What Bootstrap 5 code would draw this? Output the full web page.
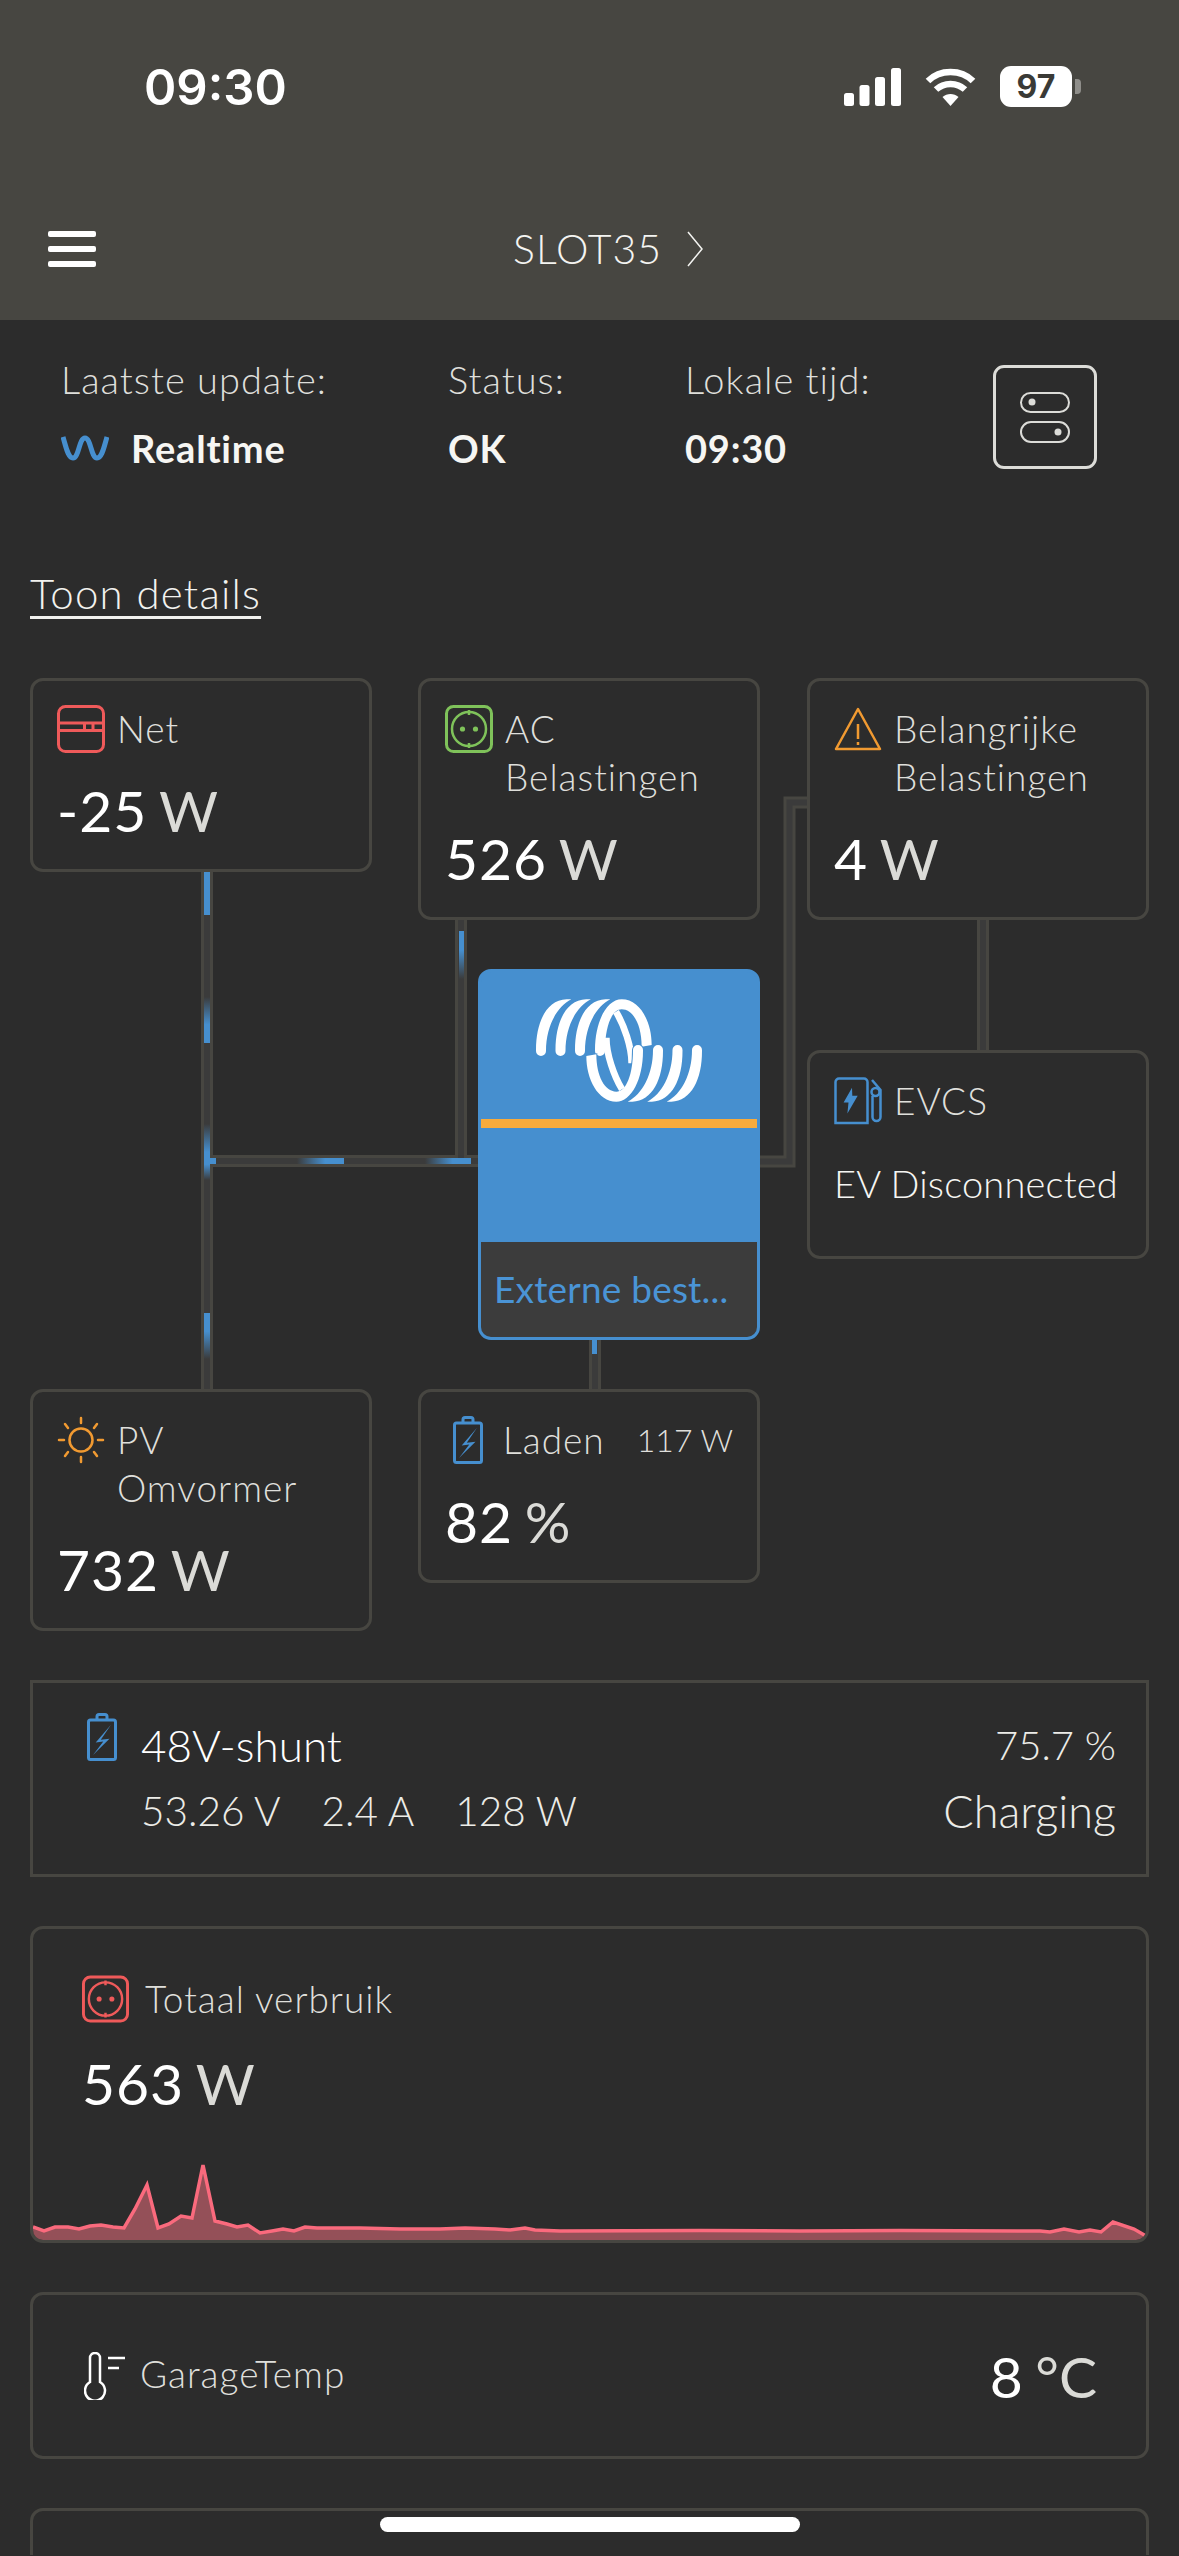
<!DOCTYPE html>
<html lang="nl">
<head>
<meta charset="UTF-8">
<meta name="viewport" content="width=device-width, initial-scale=1.0">
<title>SLOT35</title>
<link href="https://cdn.jsdelivr.net/npm/bootstrap@5.3.0/dist/css/bootstrap.min.css" rel="stylesheet">
<style>
html, body { height: 2556px; overflow: hidden; }
body { background: #2c2c2c; color: #dfdfdb; font-family: Lato, "Noto Sans", sans-serif; font-weight: 300; position: relative; }

.top-head { background: #474641; height: 320px; color: #fff; }
.ios-bar { height: 190px; padding: 58px 98px 0 144px; }
.ios-time { font-family: Inter, "Liberation Sans", sans-serif; font-weight: 600; font-size: 49px; line-height: 60px; }
.ios-icons { margin-top: 8px; }
.ios-batt { width: 72px; height: 41px; background: #fff; border-radius: 11px; color: #3a3a36; font-family: Inter, "Liberation Sans", sans-serif; font-weight: 700; font-size: 32px; line-height: 41px; text-align: center; }
.ios-nub { width: 6px; height: 15px; background: #8f8e8a; border-radius: 0 4px 4px 0; margin-left: 3px; }
.app-nav { height: 118px; padding-left: 48px; }
.burger { width: 48px; }
.burger i { display: block; height: 6px; background: #fff; border-radius: 2px; margin-bottom: 9px; }
.burger i:last-child { margin-bottom: 0; }
.site-name { margin-left: 417px; font-size: 41px; letter-spacing: 1px; line-height: 48px; color: #f4f4f1; }

.info-row { padding: 45px 82px 0 61px; }
.info-col { font-size: 38px; letter-spacing: 1px; line-height: 48px; margin-top: -10px; }
.info-col b { display: block; margin-top: 21px; font-weight: 700; color: #f6f6f3; letter-spacing: .8px; }
.col-a { width: 387px; }
.col-a b { gap: 22px; }
.col-b { width: 237px; }
.col-c { width: 308px; }
.switch-btn { width: 104px; height: 104px; border: 3px solid #dcdcd8; border-radius: 11px; }

.toon-link { display: block; margin: 97px 0 61px 30px; font-size: 42px; letter-spacing: 1.200px; line-height: 48px; color: #f2f2ef; text-decoration: underline; text-underline-offset: 7px; text-decoration-thickness: 3px; }

.page-main { padding: 0 30px; }
.flow-map { position: relative; height: 953px; }
.wire-layer { position: absolute; left: 0; top: 0; }
.tile { position: absolute; background: #2c2c2c; border: 3px solid #474641; border-radius: 13px; width: 342px; padding: 24px 24px 0 24px; }
.tile-head { font-size: 37px; letter-spacing: 1px; line-height: 48px; display: flex; gap: 12px; }
.tile-head svg { flex: none; }
.tile-num { font-size: 57px; letter-spacing: 1px; word-spacing: -4px; line-height: 70px; margin-top: 22px; font-weight: 400; color: #fff; }
.tile-num span, .big-num span { color: #dbdbd7; font-weight: 400; letter-spacing: 0; }
.t-net { left: 0; top: 0; height: 194px; }
.t-ac { left: 388px; top: 0; height: 242px; }
.t-ess { left: 777px; top: 0; height: 242px; }
.t-evcs { left: 777px; top: 372px; height: 209px; }
.t-pv { left: 0; top: 711px; height: 242px; }
.t-bat { left: 388px; top: 711px; height: 194px; }
.ev-state { font-size: 38px; letter-spacing: .2px; line-height: 48px; margin-top: 34px; color: #f6f6f3; white-space: nowrap; }
.tail-w { margin-left: auto; font-size: 32px; letter-spacing: 0; }
.inverter { position: absolute; left: 448px; top: 291px; width: 282px; height: 371px; background: #468fcf; border: 3px solid #468fcf; border-radius: 13px; overflow: hidden; }
.inv-logo { display: block; margin: 27px auto 0; }
.inv-line { height: 9px; background: #f8ab3c; margin-top: 17px; }
.inv-gap { height: 114px; }
.inv-foot { height: 95px; background: #3c3c3c; color: #4a94d6; font-size: 37px; font-weight: 400; letter-spacing: .2px; line-height: 48px; padding: 23px 0 0 13px; white-space: nowrap; }

.wide-box { border: 3px solid #474641; margin-top: 49px; background: #2c2c2c; }
.shunt-box { height: 197px; padding: 30px 30px 0 54px; }
.shunt-name { font-size: 44px; line-height: 48px; color: #fff; margin-top: 8px; font-weight: 300; }
.shunt-sub { font-size: 40.500px; line-height: 48px; margin-top: 18px; color: #ecece8; }
.shunt-sub span { margin-right: 41px; }
.shunt-right { font-size: 40px; line-height: 48px; text-align: right; padding-top: 8px; color: #ecece8; }
.shunt-right div + div { margin-top: 18px; font-size: 45px; }
.round-box { border-radius: 13px; overflow: hidden; }
.total-box { height: 317px; }
.total-head { padding: 46px 0 0 49px; font-size: 37px; letter-spacing: 1px; line-height: 48px; }
.big-num { font-size: 57px; letter-spacing: 1px; word-spacing: -4px; line-height: 70px; font-weight: 400; color: #fff; }
.total-box .big-num { margin: 25px 0 0 49px; }
.spark { display: block; margin-top: auto; }
.temp-box { height: 167px; padding: 0 49px 0 51px; }
.temp-name { font-size: 37px; letter-spacing: 1px; line-height: 48px; margin: -3px 0 0 14px; }
.next-box { height: 47px; border-bottom: 0; border-radius: 13px 13px 0 0; }
.home-bar { position: absolute; left: 380px; top: 2517px; width: 420px; height: 15px; background: #fff; border-radius: 8px; }
</style>
</head>
<body>
<svg width="0" height="0" class="position-absolute">
  <defs>
    <symbol id="ic-socket" viewBox="0 0 48 48">
      <rect x="1.5" y="1.5" width="45" height="45" rx="7" fill="none" stroke="currentColor" stroke-width="3"/>
      <circle cx="24" cy="24" r="17" fill="none" stroke="currentColor" stroke-width="2.5"/>
      <path d="M24 5v5M24 38v5" stroke="currentColor" stroke-width="2.5"/>
      <circle cx="17.5" cy="24" r="2.6" fill="currentColor"/>
      <circle cx="30.5" cy="24" r="2.6" fill="currentColor"/>
    </symbol>
    <symbol id="ic-batt" viewBox="0 0 30 48">
      <path d="M10 7V3.5A2 2 0 0 1 12 1.5h6a2 2 0 0 1 2 2V7" fill="none" stroke="#468fcf" stroke-width="3"/>
      <rect x="1.5" y="7" width="27" height="39.5" rx="2" fill="none" stroke="#468fcf" stroke-width="3"/>
      <path d="M24 11.8 8.7 29.6l7.6-1.1L6 42l16.5-16.3-8.7 1.1z" fill="#468fcf"/>
    </symbol>
    <linearGradient id="fade-up" x1="0" y1="0" x2="0" y2="1"><stop offset="0" stop-color="#468fcf" stop-opacity="0"/><stop offset=".6" stop-color="#468fcf"/></linearGradient>
    <linearGradient id="fade-down" x1="0" y1="0" x2="0" y2="1"><stop offset=".4" stop-color="#468fcf"/><stop offset="1" stop-color="#468fcf" stop-opacity="0"/></linearGradient>
    <linearGradient id="fade-both" x1="0" y1="0" x2="0" y2="1"><stop offset="0" stop-color="#468fcf" stop-opacity="0"/><stop offset=".5" stop-color="#468fcf"/><stop offset=".72" stop-color="#468fcf"/><stop offset="1" stop-color="#468fcf" stop-opacity="0"/></linearGradient>
    <linearGradient id="fade-right" x1="0" y1="0" x2="1" y2="0"><stop offset="0" stop-color="#468fcf" stop-opacity="0"/><stop offset=".6" stop-color="#468fcf"/></linearGradient>
  </defs>
</svg>

<header class="top-head">
  <div class="ios-bar d-flex justify-content-between align-items-start">
    <div class="ios-time">09:30</div>
    <div class="ios-icons d-flex align-items-center gap-4">
      <svg width="57" height="38" viewBox="0 0 57 38" fill="#fff">
        <rect x="0" y="25" width="10" height="13" rx="2.5"/><rect x="15.5" y="17" width="10" height="21" rx="2.5"/>
        <rect x="31" y="9" width="10" height="29" rx="2.5"/><rect x="47" y="0" width="10" height="38" rx="2.5"/>
      </svg>
      <svg width="51" height="38" viewBox="0 0 51 38" fill="none" stroke="#fff" stroke-width="6.5" stroke-linecap="butt">
        <path d="M3 13C15 1 36 1 48 13"/><path d="M11 21.500C19 14 32 14 40 21.500"/>
        <path d="M25.500 38 17.500 29C22 25 29 25 33.500 29z" fill="#fff" stroke="none"/>
      </svg>
      <div class="d-flex align-items-center">
        <div class="ios-batt">97</div><div class="ios-nub"></div>
      </div>
    </div>
  </div>
  <nav class="app-nav d-flex align-items-center">
    <div class="burger"><i></i><i></i><i></i></div>
    <div class="site-name d-flex align-items-center gap-4">SLOT35
      <svg width="18" height="36" viewBox="0 0 18 36" fill="none" stroke="#f4f4f1" stroke-width="1.500"><path d="M2 1 16 18 2 35"/></svg>
    </div>
  </nav>
</header>

<section class="info-row d-flex align-items-start">
  <div class="info-col col-a">Laatste update:
    <b class="d-flex align-items-center">
      <svg width="48" height="26" viewBox="0 0 48 26" fill="none" stroke="#468fcf" stroke-width="5"><path d="M2 2C5 12 7 23 12 23 18 23 18 3 24 3 30 3 30 23 36 23 41 23 43 12 46 2"/></svg>
      Realtime</b>
  </div>
  <div class="info-col col-b">Status:<b>OK</b></div>
  <div class="info-col col-c">Lokale tijd:<b>09:30</b></div>
  <div class="switch-btn d-flex align-items-center justify-content-center">
    <svg width="52" height="52" viewBox="0 0 52 52" fill="none" stroke="#dcdcd8" stroke-width="2">
      <rect x="2" y="2" width="48" height="19" rx="9.500"/><rect x="2" y="31" width="48" height="20" rx="10"/>
      <circle cx="13" cy="11" r="3.500" fill="#dcdcd8" stroke="none"/><circle cx="39" cy="41" r="3.500" fill="#dcdcd8" stroke="none"/>
    </svg>
  </div>
</section>

<a class="toon-link" href="#">Toon details</a>

<main class="page-main">
  <div class="flow-map">
    <!-- wires, coordinates are page pixels -->
    <svg class="wire-layer" width="1119" height="953" viewBox="30 678 1119 953" fill="none">
      <g stroke="#474641" stroke-width="12">
        <path d="M207 872V1389M207 1161H478M461 920V1161M595 1340V1389M983 920V1050M760 1161.500H789.500V802.500H807"/>
      </g>
      <g stroke="#3b3b3b" stroke-width="6">
        <path d="M207 872V1389M207 1161H478M461 920V1161M595 1340V1389M983 920V1050M760 1161.500H789.500V802.500H807"/>
      </g>
      <rect x="204" y="872" width="6" height="43" fill="#468fcf"/>
      <rect x="204" y="997" width="6" height="46" fill="url(#fade-up)"/>
      <rect x="204" y="1124" width="6" height="56" fill="url(#fade-both)"/>
      <rect x="204" y="1313" width="6" height="46" fill="url(#fade-down)"/>
      <rect x="210" y="1158" width="6" height="6" fill="#468fcf"/>
      <rect x="297" y="1158" width="47" height="6" fill="url(#fade-right)"/>
      <rect x="425" y="1158" width="46" height="6" fill="url(#fade-right)"/>
      <rect x="459" y="931" width="5" height="48" fill="url(#fade-down)"/>
      <rect x="592" y="1340" width="5" height="14" fill="#468fcf"/>
    </svg>

    <div class="card tile t-net">
      <div class="tile-head">
        <svg width="48" height="48" viewBox="0 0 48 48" fill="none" stroke="#ef5a5a" stroke-width="3">
          <rect x="1.500" y="1.500" width="45" height="45" rx="7"/><path d="M2 18H46M2 25.500H46M27.500 18V25.500M36 18V25.500"/>
        </svg>
        <div>Net</div>
      </div>
      <div class="tile-num">-25 <span>W</span></div>
    </div>

    <div class="card tile t-ac">
      <div class="tile-head">
        <svg width="48" height="48"><use href="#ic-socket" color="#7fc25a"/></svg>
        <div>AC<br>Belastingen</div>
      </div>
      <div class="tile-num">526 <span>W</span></div>
    </div>

    <div class="card tile t-ess">
      <div class="tile-head">
        <svg width="48" height="48" viewBox="0 0 48 48" fill="none" stroke="#f19a31" stroke-width="2.500">
          <path d="M24 4 46 44H2z" stroke-linejoin="round"/><path d="M24 19V34M24 37V40"/>
        </svg>
        <div>Belangrijke<br>Belastingen</div>
      </div>
      <div class="tile-num">4 <span>W</span></div>
    </div>

    <div class="card tile t-evcs">
      <div class="tile-head">
        <svg width="48" height="48" viewBox="0 0 48 48" fill="none" stroke="#468fcf" stroke-width="2.500">
          <path d="M1.500 46V5A3.500 3.500 0 0 1 5 1.500H30A3.500 3.500 0 0 1 33.500 5V46z"/>
          <path d="M18 10.700 9.600 25.400h4.900L13.400 36.600 23.700 18.700h-5.400z" fill="#468fcf" stroke="none"/>
          <circle cx="41.500" cy="15" r="4"/><path d="M38 3 46.500 13V40A4 4 0 0 1 38.500 40V19"/>
        </svg>
        <div>EVCS</div>
      </div>
      <div class="ev-state">EV Disconnected</div>
    </div>

    <div class="card tile t-pv">
      <div class="tile-head">
        <svg width="48" height="48" viewBox="0 0 48 48" fill="none" stroke="#f19a31" stroke-width="2.500" stroke-linecap="round">
          <circle cx="24" cy="24" r="11.500"/>
          <path d="M24 2V7M24 41V46M2 24H7M41 24H46M8 8 11 12M40 8 37 12M8 40 11 36M40 40 37 36"/>
        </svg>
        <div>PV<br>Omvormer</div>
      </div>
      <div class="tile-num">732 <span>W</span></div>
    </div>

    <div class="card tile t-bat">
      <div class="tile-head">
        <svg width="30" height="48" class="ms-2"><use href="#ic-batt"/></svg>
        <div class="ms-2">Laden</div>
        <div class="tail-w">117 W</div>
      </div>
      <div class="tile-num">82 <span>%</span></div>
    </div>

    <div class="inverter">
      <svg class="inv-logo" width="166" height="103" viewBox="288 148 498 307">
        <g id="coil-half" fill="#fff" stroke="#468fcf" stroke-width="6" paint-order="stroke">
          <path id="coil-arc" d="M288 300C288 215 320 150 380 148L394 148C350 170 318 230 318 303A15 15 0 0 1 288 303Z"/>
          <use href="#coil-arc" x="58.500"/>
          <use href="#coil-arc" x="117"/>
          <path d="M465 300C465 215 500 148 545 148C600 148 635 215 635 285L605 290C605 225 580 178 545 178C515 178 495 230 495 303A15 15 0 0 1 465 303Z"/>
          <path d="M528 185C552 225 575 290 575 340" fill="none" stroke="#fff" stroke-width="20"/>
        </g>
        <use href="#coil-half" transform="rotate(180 537 301.500)"/>
      </svg>
      <div class="inv-line"></div>
      <div class="inv-gap"></div>
      <div class="inv-foot">Externe best...</div>
    </div>
  </div>

  <div class="wide-box shunt-box d-flex justify-content-between">
    <div class="d-flex gap-4">
      <svg width="30" height="48"><use href="#ic-batt"/></svg>
      <div>
        <div class="shunt-name">48V-shunt</div>
        <div class="shunt-sub"><span>53.26 V</span><span>2.4 A</span><span>128 W</span></div>
      </div>
    </div>
    <div class="shunt-right"><div>75.7 %</div><div>Charging</div></div>
  </div>

  <div class="wide-box round-box total-box d-flex flex-column">
    <div class="total-head d-flex gap-3 align-items-center">
      <svg width="47" height="48"><use href="#ic-socket" color="#ef5a5a"/></svg>
      <div>Totaal verbruik</div>
    </div>
    <div class="big-num">563 <span>W</span></div>
    <svg class="spark" width="1113" height="100" viewBox="33 2141 1113 100">
      <path d="M33 2228 44 2232 55 2228 68 2228 79 2230 90 2227 101 2226 113 2228 124 2229 135 2210 147 2186 158 2229 169 2225 181 2217 192 2219 203 2166 215 2222 227 2225 237 2228 248 2226 260 2234 272 2232 283 2230 294 2232 305 2228 317 2229 360 2229 400 2230 440 2230 465 2229 495 2230 510 2231 525 2229 535 2231 560 2232 700 2231.500 800 2232 900 2231.500 1040 2232 1050 2233 1064 2230 1079 2233 1090 2231 1101 2233 1113 2223 1134 2230 1146 2237V2241H33Z" fill="#945058"/>
      <path d="M33 2228 44 2232 55 2228 68 2228 79 2230 90 2227 101 2226 113 2228 124 2229 135 2210 147 2186 158 2229 169 2225 181 2217 192 2219 203 2166 215 2222 227 2225 237 2228 248 2226 260 2234 272 2232 283 2230 294 2232 305 2228 317 2229 360 2229 400 2230 440 2230 465 2229 495 2230 510 2231 525 2229 535 2231 560 2232 700 2231.500 800 2232 900 2231.500 1040 2232 1050 2233 1064 2230 1079 2233 1090 2231 1101 2233 1113 2223 1134 2230 1146 2237" fill="none" stroke="#fa6a7d" stroke-width="3.500"/>
    </svg>
  </div>

  <div class="wide-box round-box temp-box d-flex align-items-center justify-content-between">
    <div class="d-flex align-items-center">
      <svg width="42" height="48" viewBox="0 0 42 48" fill="none" stroke="#fff" stroke-width="2.500">
        <path d="M6 29V5A5 5 0 0 1 16 5V29A10 10 0 1 1 6 29Z" transform="translate(0 1)"/>
        <path d="M24 6H41M24 16H35"/>
      </svg>
      <div class="temp-name">GarageTemp</div>
    </div>
    <div class="big-num">8 <span>°C</span></div>
  </div>

  <div class="wide-box round-box next-box"></div>
</main>

<div class="home-bar"></div>
<script src="https://cdn.jsdelivr.net/npm/bootstrap@5.3.0/dist/js/bootstrap.bundle.min.js"></script>
</body>
</html>
